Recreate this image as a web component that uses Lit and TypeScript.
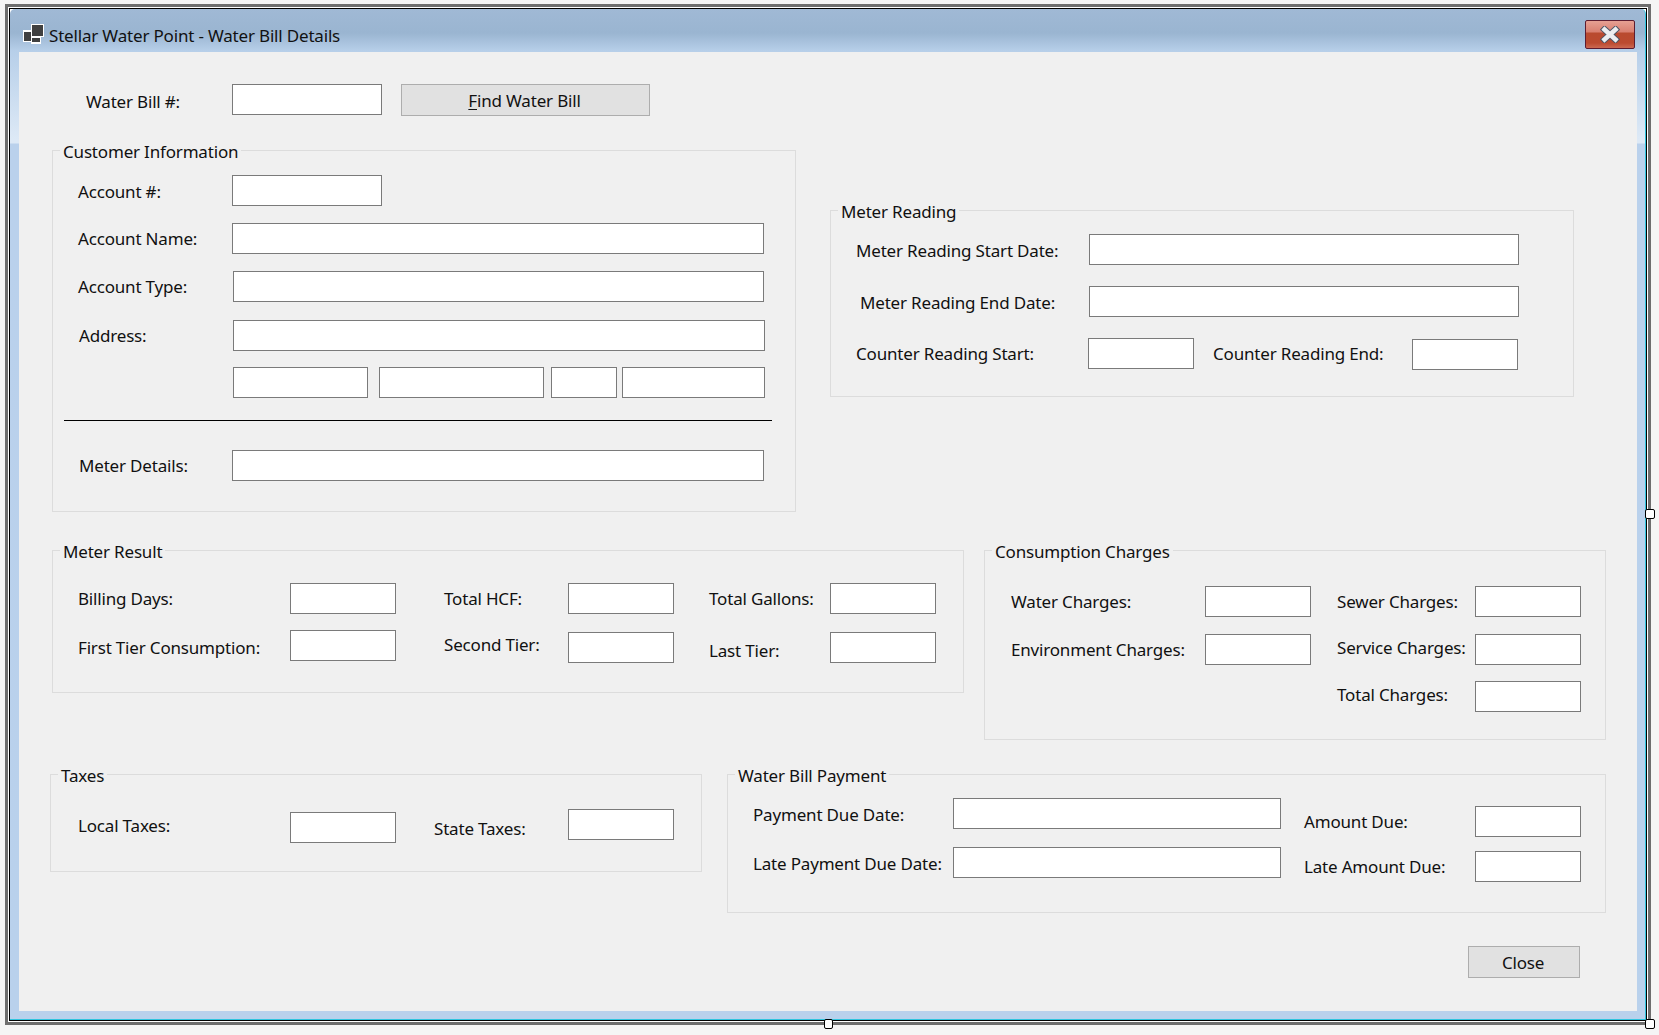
import { LitElement, html, css, unsafeCSS } from "lit";
import { customElement } from "lit/decorators.js";

const spacing = Array.from({ length: 61 }, (_, n) => `.mt${n}{margin-top:${n}px}.ml${n}{margin-left:${n}px}`).join("");

@customElement("app-root")
export class AppRoot extends LitElement {
  static styles = [
    css`
      :host { display: block; background: #f5f5f5; font-family: "Noto Sans", "Open Sans", sans-serif; font-size: 17px; letter-spacing: -0.18px; color: #111; }
      * { box-sizing: border-box; }
      .page { padding: 4px 8px 10px 5px; }
      .frame { position: relative; width: 1646px; border: 3px solid #6e6e6e; padding: 2px; background: #fff; box-shadow: inset 0 0 0 1px #fff, inset 0 0 0 2px #000; }
      .body { border-right: 1px solid #2fc4de; border-bottom: 1px solid #2fc4de; border-radius: 5px 5px 0 0;
        background: linear-gradient(to bottom, #a0b9d5 0, #9ab5d1 24px, #b7cfe9 42px, #dde9f6 130px, #dde9f6 134px, #bad1ec 135px, #b9d1ec 100%); }
      .titlebar { display: flex; height: 43px; padding: 0 10px 0 13px; }
      .ticon { display: block; width: 22px; height: 21px; margin-top: 15px; }
      .ttext { margin: 16px 0 0 4px; line-height: 22px; white-space: nowrap; flex: 1; }
      .xbtn { width: 50px; height: 29px; margin-top: 11px; border: 1px solid #5c1c30; border-radius: 2px; display: flex; align-items: center; justify-content: center;
        background: linear-gradient(to bottom, #e6a093 0, #d97f70 11px, #b94a2f 12px, #bb4a30 22px, #cf6e58 28px); }
      .xbtn svg { display: block; width: 20px; height: 17px; }
      .client { margin: 0 8px 8px 9px; background: #f0f0f0; padding: 32px 57px 33px 0; }
      .top { display: flex; align-items: flex-start; }
      .leftcol { width: 777px; flex: none; }
      .band { display: flex; align-items: flex-start; }
      .closewrap { display: flex; justify-content: flex-end; margin-top: 33px; }

      .group { position: relative; border: 1px solid #dcdcdc; flex: none; }
      .legend { position: absolute; top: -10px; left: 7px; padding: 0 3px; line-height: 22px; background: #f0f0f0; white-space: nowrap; }

      .row { display: grid; align-items: start; }
      .lb { line-height: 22px; white-space: nowrap; }
      input { display: block; height: 31px; padding: 0; margin-bottom: 0; border: 1px solid #7a7a7a; background: #fff; border-radius: 0; outline: none; }
      .btn { display: block; height: 32px; border: 1px solid #adadad; background: #e1e1e1; font: inherit; letter-spacing: inherit; color: inherit; padding: 2px 2px 0 0; line-height: 28px; }
      .btn u { text-underline-offset: 2px; }
      .w150 { width: 150px; } .w106 { width: 106px; } .w532 { width: 532px; } .w531 { width: 531px; }
      .w430 { width: 430px; } .w328 { width: 328px; }
      .w135 { width: 135px; } .w165 { width: 165px; } .w66 { width: 66px; } .w143 { width: 143px; }
      .w249 { width: 249px; } .w112 { width: 112px; }

      .water { margin-left: 67px; grid-template-columns: 146px 150px 268px; }
      .customer { width: 744px; margin-left: 33px; margin-top: 34px; padding: 24px 0 30px 0; }
      .customer .row { margin-left: 25px; grid-template-columns: 154px 1fr; }
      .addr { display: flex; }
      .divider { width: 708px; height: 1px; margin-left: 11px; background: #000; }

      .reading { width: 744px; margin-left: 34px; margin-top: 126px; padding: 23px 0 26px 25px; }
      .reading .two { grid-template-columns: 233px 430px; }
      .reading .four { grid-template-columns: 232px 106px 218px 106px; }

      .result { width: 912px; margin-left: 33px; padding: 32px 0 29px 25px; }
      .result .row { grid-template-columns: 212px 106px 172px 106px 156px 106px; }
      .charges { width: 622px; margin-left: 20px; padding: 35px 0 27px 26px; }
      .charges .row { grid-template-columns: 194px 106px 164px 106px; }
      .taxes { width: 652px; margin-left: 31px; padding: 34px 0 28px 27px; }
      .taxes .row { grid-template-columns: 212px 106px 172px 106px; }
      .payment { width: 879px; margin-left: 25px; padding: 23px 0 30px 25px; }
      .payment .row { grid-template-columns: 200px 328px 194px 106px; }

      .handle { position: absolute; width: 10px; height: 10px; background: #fff; border: 1px solid #000; border-radius: 2px; }
      .h-right { right: -7px; top: 502px; }
      .h-bottom { left: 816px; bottom: -7px; width: 9px; }
      .h-corner { right: -7px; bottom: -7px; }
    `,
    unsafeCSS(spacing),
  ];

  render() {
    return html`
      <div class="page">
        <div class="frame">
          <div class="body">
            <div class="titlebar">
              <svg class="ticon" viewBox="0 0 22 21">
                <rect x="8" y="0" width="13" height="13" fill="#fff"/>
                <rect x="9" y="1" width="11" height="11" fill="#404040"/>
                <rect x="0" y="6" width="9" height="12" fill="#fff"/>
                <rect x="1" y="8" width="7" height="9" fill="#404040"/>
                <rect x="8" y="12" width="10" height="8" fill="#fff"/>
                <rect x="9" y="14" width="8" height="4" fill="#404040"/>
              </svg>
              <div class="ttext">Stellar Water Point - Water Bill Details</div>
              <div class="xbtn">
                <svg viewBox="0 0 20 17">
                  <path d="M4.5 3.5 L15.5 13.5 M15.5 3.5 L4.5 13.5" stroke="#4c5565" stroke-width="6.5" stroke-linecap="square" fill="none"/>
                  <path d="M4.5 3.5 L15.5 13.5 M15.5 3.5 L4.5 13.5" stroke="#eceef0" stroke-width="4.5" stroke-linecap="square" fill="none"/>
                </svg>
              </div>
            </div>
            <div class="client">
              <div class="top">
                <div class="leftcol">
                  <div class="row water">
                    <div class="lb mt7">Water Bill #:</div>
                    <input class="w150" />
                    <button class="btn w249 ml19"><u>F</u>ind Water Bill</button>
                  </div>
                  <div class="group customer">
                    <div class="legend">Customer Information</div>
                    <div class="row">
                      <div class="lb mt6">Account #:</div><input class="w150" />
                    </div>
                    <div class="row mt17">
                      <div class="lb mt5">Account Name:</div><input class="w532" />
                    </div>
                    <div class="row mt17">
                      <div class="lb mt5">Account Type:</div><input class="w531 ml1" />
                    </div>
                    <div class="row mt18">
                      <div class="lb mt5 ml1">Address:</div><input class="w532 ml1" />
                    </div>
                    <div class="row mt16">
                      <span></span>
                      <div class="addr ml1">
                        <input class="w135" /><input class="w165 ml11" /><input class="w66 ml7" /><input class="w143 ml5" />
                      </div>
                    </div>
                    <div class="divider mt22"></div>
                    <div class="row mt29">
                      <div class="lb mt5 ml1">Meter Details:</div><input class="w532" />
                    </div>
                  </div>
                </div>
                <div class="group reading">
                  <div class="legend">Meter Reading</div>
                  <div class="row two">
                    <div class="lb mt6">Meter Reading Start Date:</div><input class="w430" />
                  </div>
                  <div class="row two mt21">
                    <div class="lb mt6 ml4">Meter Reading End Date:</div><input class="w430" />
                  </div>
                  <div class="row four mt21">
                    <div class="lb mt5">Counter Reading Start:</div><input class="w106" />
                    <div class="lb mt5 ml19">Counter Reading End:</div><input class="w106 mt1" />
                  </div>
                </div>
              </div>

              <div class="band mt38">
                <div class="group result">
                  <div class="legend">Meter Result</div>
                  <div class="row">
                    <div class="lb mt5">Billing Days:</div><input class="w106" />
                    <div class="lb mt5 ml48">Total HCF:</div><input class="w106" />
                    <div class="lb mt5 ml35">Total Gallons:</div><input class="w106" />
                  </div>
                  <div class="row mt16">
                    <div class="lb mt7">First Tier Consumption:</div><input class="w106" />
                    <div class="lb mt4 ml48">Second Tier:</div><input class="w106 mt2" />
                    <div class="lb mt10 ml35">Last Tier:</div><input class="w106 mt2" />
                  </div>
                </div>
                <div class="group charges">
                  <div class="legend">Consumption Charges</div>
                  <div class="row">
                    <div class="lb mt5">Water Charges:</div><input class="w106" />
                    <div class="lb mt5 ml26">Sewer Charges:</div><input class="w106" />
                  </div>
                  <div class="row mt17">
                    <div class="lb mt5">Environment Charges:</div><input class="w106" />
                    <div class="lb mt3 ml26">Service Charges:</div><input class="w106" />
                  </div>
                  <div class="row mt16">
                    <span></span><span></span>
                    <div class="lb mt3 ml26">Total Charges:</div><input class="w106" />
                  </div>
                </div>
              </div>

              <div class="band mt34">
                <div class="group taxes">
                  <div class="legend">Taxes</div>
                  <div class="row">
                    <div class="lb mt6">Local Taxes:</div><input class="w106 mt3" />
                    <div class="lb mt9 ml38">State Taxes:</div><input class="w106" />
                  </div>
                </div>
                <div class="group payment">
                  <div class="legend">Water Bill Payment</div>
                  <div class="row">
                    <div class="lb mt6">Payment Due Date:</div><input class="w328" />
                    <div class="lb mt13 ml23">Amount Due:</div><input class="w106 mt8" />
                  </div>
                  <div class="row mt10">
                    <div class="lb mt6">Late Payment Due Date:</div><input class="w328" />
                    <div class="lb mt9 ml23">Late Amount Due:</div><input class="w106 mt4" />
                  </div>
                </div>
              </div>

              <div class="closewrap">
                <button class="btn w112">Close</button>
              </div>
            </div>
          </div>
          <div class="handle h-right"></div>
          <div class="handle h-bottom"></div>
          <div class="handle h-corner"></div>
        </div>
      </div>
    `;
  }
}
